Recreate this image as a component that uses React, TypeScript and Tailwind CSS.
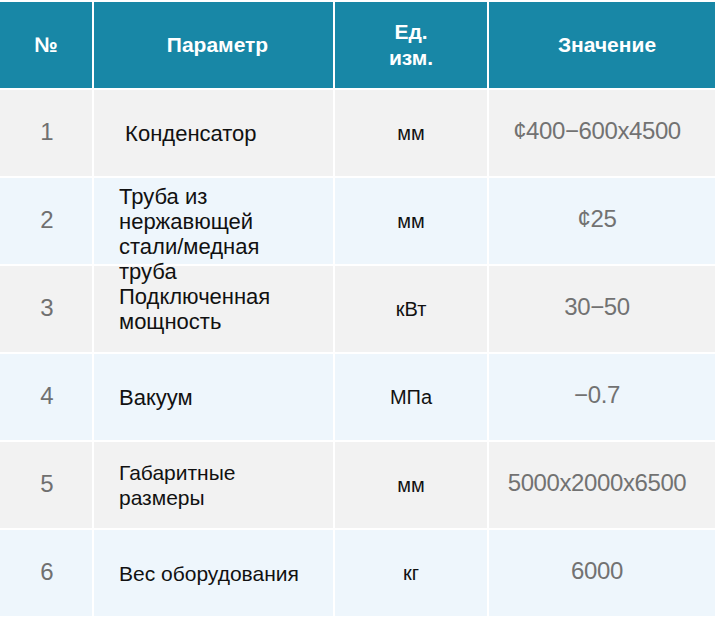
const rows: Array<{ n: string; param: string; unit: string; value: string; top?: boolean; narrow?: boolean }> = [
  { n: "1", param: "\u00A0Конденсатор", unit: "мм", value: "¢400−600x4500" },
  { n: "2", param: "Труба из нержавющей стали/медная труба", unit: "мм", value: "¢25", top: true },
  { n: "3", param: "Подключенная мощность", unit: "кВт", value: "30−50" },
  { n: "4", param: "Вакуум", unit: "МПа", value: "−0.7" },
  { n: "5", param: "Габаритные размеры", unit: "мм", value: "5000x2000x6500", narrow: true },
  { n: "6", param: "Вес оборудования", unit: "кг", value: "6000", narrow: true }
];

export default function App() {
  return (
    <div className="w-[720px] h-[624px] bg-white pt-[2px] font-['Liberation_Sans',Arial,sans-serif]">
      <div className="grid w-[715px] grid-cols-[92px_239px_152px_226px] gap-[2px]">
        <div className="flex h-[86px] items-center justify-center bg-[#1887a6] text-[21px] font-bold text-white">№</div>
        <div className="flex h-[86px] items-center justify-center pl-[8px] bg-[#1887a6] text-[21px] font-bold text-white">Параметр</div>
        <div className="flex h-[86px] items-center justify-center bg-[#1887a6] text-center text-[21px] font-bold leading-[26px] text-white">
          Ед.
          <br />
          изм.
        </div>
        <div className="flex h-[86px] items-center justify-center pl-[10px] bg-[#1887a6] text-[21px] font-bold text-white">Значение</div>

        {rows.map((r, i) => {
          const bg = i % 2 === 0 ? "bg-[#f2f2f2]" : "bg-[#eef6fc]";
          return (
            <div key={r.n} className="contents">
              <div className={"flex h-[86px] items-center justify-center pl-[2px] pb-[2px] text-[24px] text-[#707070] " + bg}>{r.n}</div>
              <div
                className={
                  "flex h-[86px] pl-[25px] pr-[28px] leading-[25px] text-[#111] " +
                  (r.narrow ? "text-[21px] " : "text-[22px] ") +
                  (r.top ? "relative z-10 items-start pt-[6px] " : "items-center ") +
                  bg
                }
              >
                <span>{r.param}</span>
              </div>
              <div className={"flex h-[86px] items-center justify-center text-[20px] text-[#111] " + bg}>{r.unit}</div>
              <div className={"flex h-[86px] items-center justify-center pr-[10px] pb-[4px] text-[24px] tracking-[-0.4px] text-[#727272] " + bg}>{r.value}</div>
            </div>
          );
        })}
      </div>
    </div>
  );
}
